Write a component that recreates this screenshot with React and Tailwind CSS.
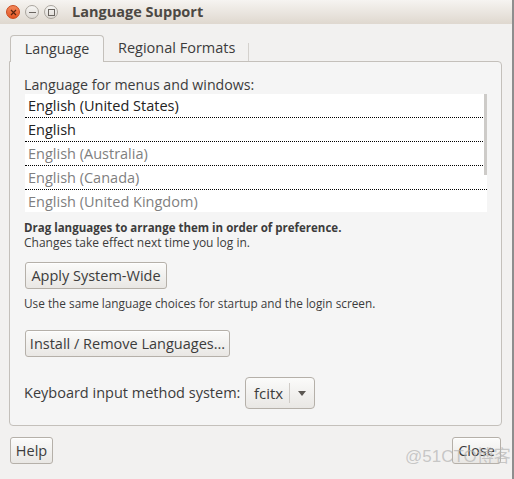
import React from 'react';

const font = { fontFamily: '"Open Sans", "Noto Sans", sans-serif' };

const GtkButton = ({ children, className = '' }) => (
  <button
    className={`h-[27px] rounded-[3px] border border-[#b5b0a9] bg-gradient-to-b from-[#fbfbfa] to-[#e9e7e4] text-[14.5px] text-[#3c3c3c] whitespace-nowrap shadow-[0_1px_0_rgba(255,255,255,0.8)_inset] flex items-center justify-center ${className}`}
  >
    {children}
  </button>
);

const languages = [
  { name: 'English (United States)', active: true },
  { name: 'English', active: true },
  { name: 'English (Australia)', active: false },
  { name: 'English (Canada)', active: false },
  { name: 'English (United Kingdom)', active: false },
];

export default function App() {
  return (
    <div className="relative w-[514px] h-[479px] overflow-hidden bg-[#f2f1f0] border-r-2 border-[#8e8e8e] text-[#3c3c3c]" style={font}>
      {/* title bar */}
      <div className="h-[24px] flex items-center bg-gradient-to-b from-[#f6f4f1] to-[#dfd8cf]">
        <div className="flex items-center gap-[5px] pl-[6px]">
          <div className="w-[14px] h-[14px] rounded-full bg-gradient-to-b from-[#f3885a] to-[#e35420] border border-[#c9491d] flex items-center justify-center">
            <svg width="7" height="7" viewBox="0 0 7 7">
              <path d="M1 1 L6 6 M6 1 L1 6" stroke="#5a2410" strokeWidth="1.2" />
            </svg>
          </div>
          <div className="w-[14px] h-[14px] rounded-full bg-gradient-to-b from-[#f7f6f4] to-[#dedad5] border border-[#aaa59e] flex items-center justify-center">
            <div className="w-[7px] h-[1px] bg-[#6a6560]" />
          </div>
          <div className="w-[14px] h-[14px] rounded-full bg-gradient-to-b from-[#f7f6f4] to-[#dedad5] border border-[#aaa59e] flex items-center justify-center">
            <div className="w-[7px] h-[7px] border border-[#6a6560]" />
          </div>
        </div>
        <div className="ml-[14px] text-[14.5px] font-bold text-[#4c4843] leading-none">Language Support</div>
      </div>

      <div className="pl-[9px] pr-[10px] pt-[11px]">
        {/* tabs */}
        <div className="flex items-end h-[26px] pl-[1px]">
          <div className="relative z-10 -mb-px h-[27px] w-[94px] rounded-t-[4px] border border-b-0 border-[#c4c0bb] bg-[#f5f5f5] flex items-center justify-center text-[14.3px] text-[#3c3c3c]">
            Language
          </div>
          <div className="h-[26px] w-[145px] flex items-center pl-[14px] text-[14.5px] text-[#3c3c3c]">
            <span>Regional Formats</span>
            <div className="ml-auto mt-[8px] h-[18px] w-px bg-[#d4d1cd]" />
          </div>
        </div>

        {/* notebook page */}
        <div className="h-[365px] rounded-b-[4px] rounded-tr-[4px] border border-[#c4c0bb] bg-[#f5f5f5] px-[14px] pt-[14px]">
          <div className="text-[14.2px] leading-[18px]">Language for menus and windows:</div>
          <div className="relative ml-[1px] w-[462px] h-[118px] overflow-hidden bg-white">
            {languages.map((l) => (
              <div
                key={l.name}
                className={`h-[24px] pl-[3px] flex items-center border-b border-dotted border-black text-[14.5px] ${l.active ? 'text-[#222222]' : 'text-[#7f7f7f]'}`}
              >
                {l.name}
              </div>
            ))}
            <div className="absolute right-0 top-0 w-[3px] h-[81px] bg-[#cdcbc8]" />
          </div>

          <div className="mt-[8px] text-[12px] leading-[15px]">
            <div className="font-bold text-[11.5px]">Drag languages to arrange them in order of preference.</div>
            <div>Changes take effect next time you log in.</div>
          </div>

          <GtkButton className="mt-[12px] ml-[1px] w-[142px]">Apply System-Wide</GtkButton>

          <div className="mt-[7px] text-[11.8px] leading-[15px]">Use the same language choices for startup and the login screen.</div>

          <GtkButton className="mt-[19px] ml-[1px] w-[205px]">Install / Remove Languages...</GtkButton>

          <div className="mt-[20px] flex items-center">
            <span className="w-[221px] whitespace-nowrap text-[14.5px]">Keyboard input method system:</span>
            <div className="h-[32px] w-[70px] rounded-[4px] border border-[#b5b0a9] bg-gradient-to-b from-[#fbfbfa] to-[#e9e7e4] flex items-center">
              <span className="pl-[8px] text-[15px] text-[#3c3c3c]">fcitx</span>
              <div className="ml-auto h-[20px] w-px bg-[#cfcbc6]" />
              <svg className="mx-[8px]" width="8" height="5" viewBox="0 0 8 5">
                <path d="M0 0 H8 L4 5 Z" fill="#5b5752" />
              </svg>
            </div>
          </div>
        </div>

        {/* dialog buttons */}
        <div className="mt-[11px] flex justify-between pl-[1px] pr-[1px]">
          <GtkButton className="w-[43px]">Help</GtkButton>
          <GtkButton className="w-[49px]">Close</GtkButton>
        </div>
      </div>

      <div
        className="pointer-events-none absolute left-[405px] top-[444px] text-[17px] text-[#b4b4b4]/70"
        style={{ fontFamily: '"Liberation Sans", "Noto Sans CJK SC", sans-serif' }}
      >
        @51CTO博客
      </div>
    </div>
  );
}
